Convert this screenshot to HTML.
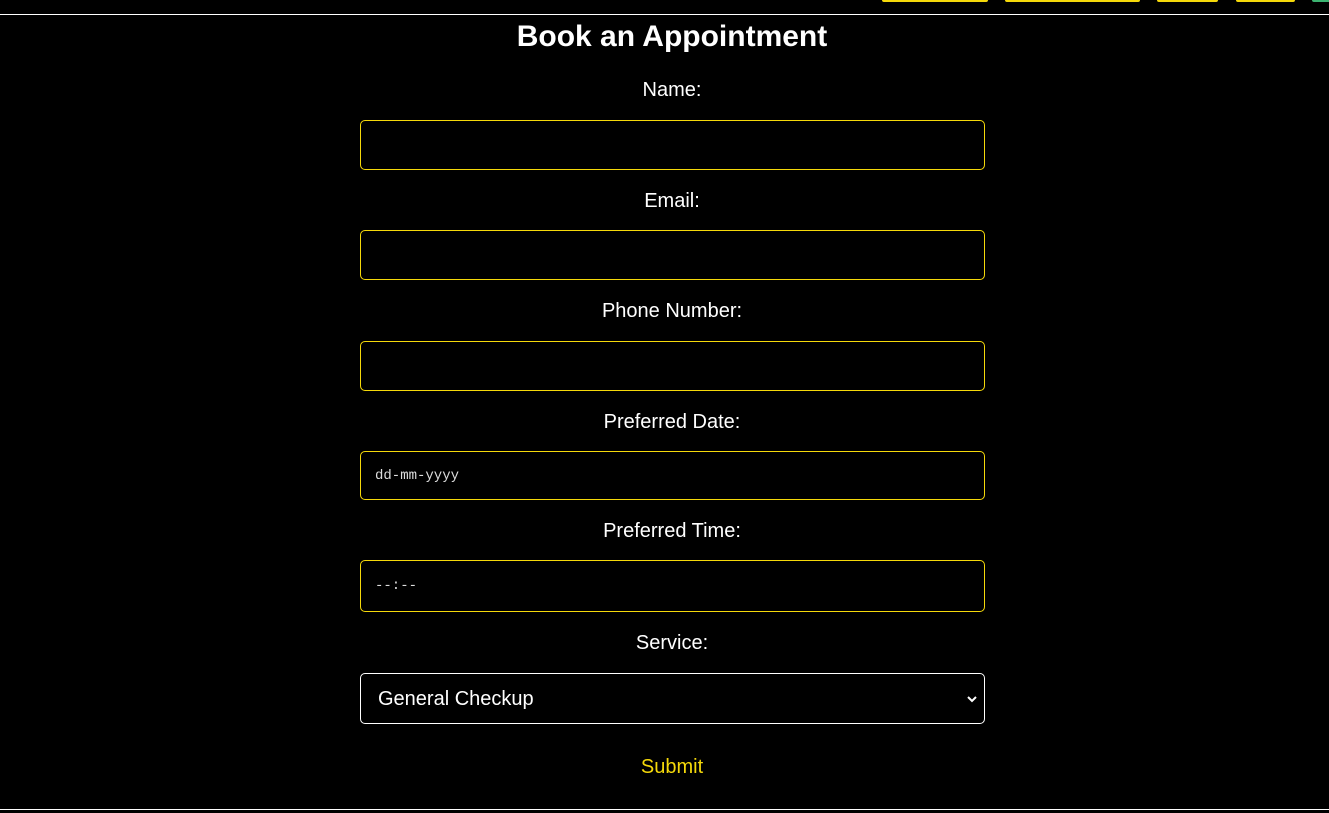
<!DOCTYPE html>
<html><head><style>
body{margin:0;background:#000;width:1329px;height:813px;position:relative;overflow:hidden;font-family:"Liberation Sans",Arial,sans-serif;color:#fff}
.bar{position:absolute;top:0;height:2px;background:#f5d90a;border-radius:0 0 3px 3px}
.hl{position:absolute;left:0;width:1329px;height:1px;background:#fff}
h1{position:absolute;top:20px;left:0;width:1344px;margin:0;text-align:center;font-size:30px;font-weight:bold}
.lbl{position:absolute;left:0;width:1344px;text-align:center;font-size:20px}
.in{position:absolute;left:360px;width:623px;border:1px solid #f5d90a;border-radius:5px;box-sizing:content-box}
.ph{position:absolute;left:14px;font-family:"Liberation Mono",monospace;font-size:14px;color:#ddd}
</style></head><body>
<div class="bar" style="left:882px;width:106px"></div>
<div class="bar" style="left:1005px;width:135px"></div>
<div class="bar" style="left:1157px;width:61px"></div>
<div class="bar" style="left:1236px;width:59px"></div>
<div class="bar" style="left:1312px;width:20px;height:2px;background:#3cb371"></div>
<div class="hl" style="top:14px"></div>
<h1>Book an Appointment</h1>
<div class="lbl" style="top:79px">Name:</div>
<div class="in" style="top:120px;height:48px"></div>
<div class="lbl" style="top:190px">Email:</div>
<div class="in" style="top:230px;height:48px"></div>
<div class="lbl" style="top:300px">Phone Number:</div>
<div class="in" style="top:341px;height:48px"></div>
<div class="lbl" style="top:411px">Preferred Date:</div>
<div class="in" style="top:451px;height:47px"><span class="ph" style="top:16px">dd-mm-yyyy</span></div>
<div class="lbl" style="top:520px">Preferred Time:</div>
<div class="in" style="top:560px;height:50px"><span class="ph" style="top:17px">--:--</span></div>
<div class="lbl" style="top:632px">Service:</div>
<div class="in" style="top:673px;height:49px;border-color:#fff"><span style="position:absolute;left:17px;top:14px;font-size:20px">General Checkup</span>
<svg style="position:absolute;right:6px;top:20px" width="12" height="10" viewBox="0 0 12 10"><path d="M2 3l4 4 4-4" stroke="#fff" stroke-width="2" fill="none"/></svg></div>
<div class="lbl" style="top:756px;color:#f5d90a">Submit</div>
<div class="hl" style="top:809px"></div>
</body></html>
